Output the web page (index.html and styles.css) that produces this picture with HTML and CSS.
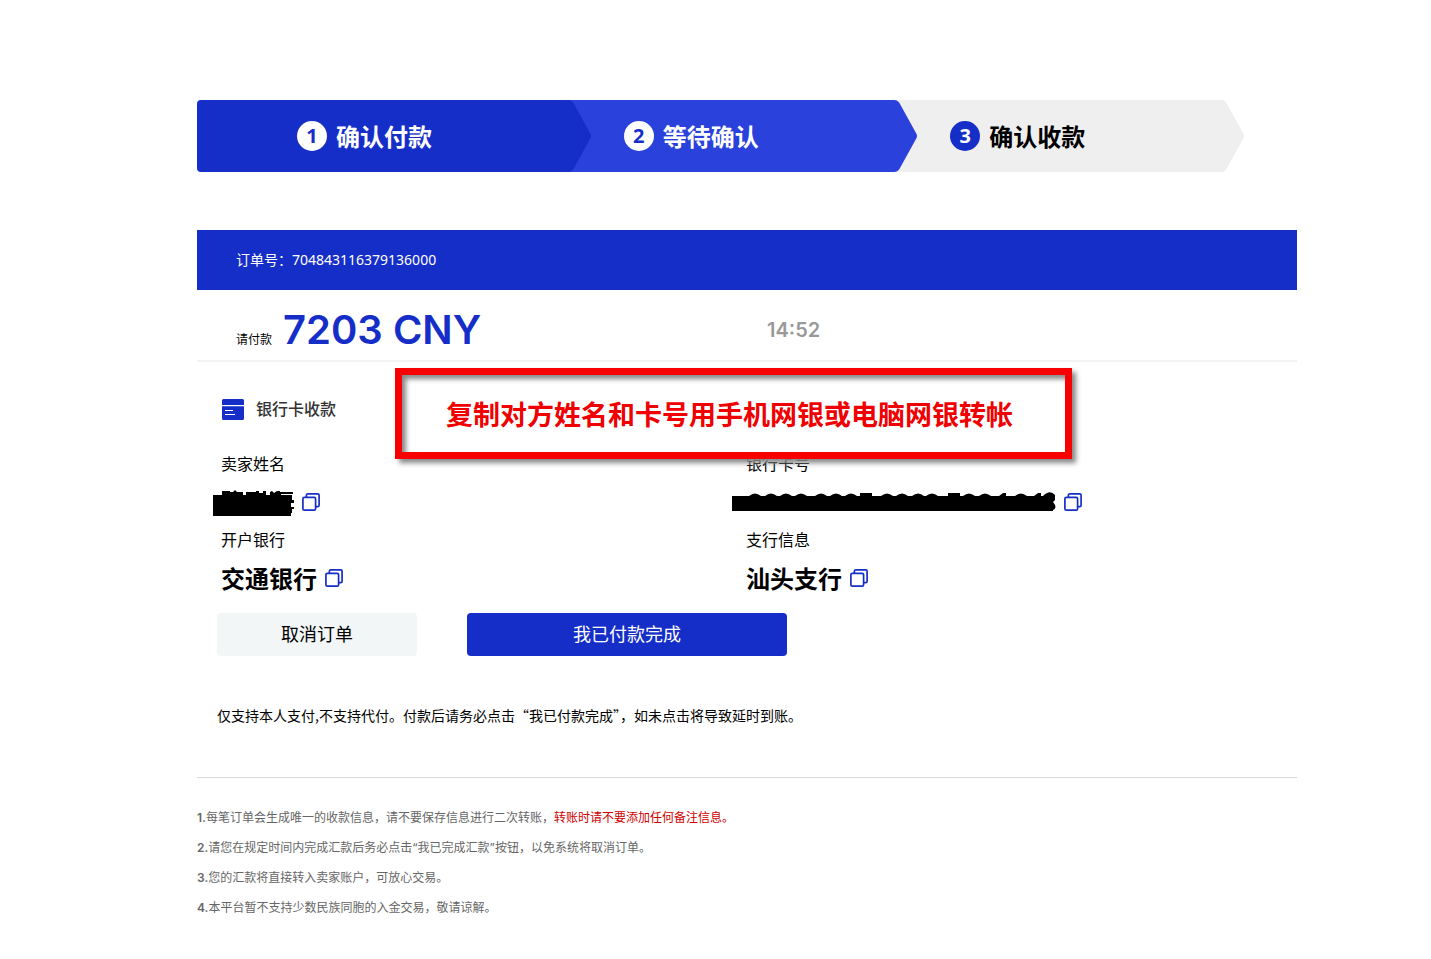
FILE: index.html
```html
<!DOCTYPE html>
<html lang="zh-CN">
<head>
<meta charset="utf-8">
<title>确认付款</title>
<link rel="stylesheet" href="styles.css">
</head>
<body>
<svg class="sprite" aria-hidden="true">
  <symbol id="cap" viewBox="0 0 24 72"><path d="M0 0H1Q5 0 7 4L23 33Q25 36 23 39L7 68Q5 72 1 72H0Z" fill="currentColor"/></symbol>
  <symbol id="copy" viewBox="0 0 18 18"><g fill="none" stroke="currentColor" stroke-width="1.7" stroke-linejoin="round"><rect x=".9" y="4.4" width="12.7" height="12.7" rx="1.4"/><path d="M4.4 4.2V2.3Q4.4 .9 5.8 .9H15.7Q17.1 .9 17.1 2.3V12.2Q17.1 13.6 15.7 13.6H13.8"/></g></symbol>
</svg>
<main class="page">
  <ol class="steps">
    <li class="step step-current"><div class="step-body"><span class="step-number">1</span><span class="step-name">确认付款</span></div><svg class="cap"><use href="#cap"/></svg></li>
    <li class="step step-next"><div class="step-body"><span class="step-number">2</span><span class="step-name">等待确认</span></div><svg class="cap"><use href="#cap"/></svg></li>
    <li class="step step-last"><div class="step-body"><span class="step-number">3</span><span class="step-name">确认收款</span></div><svg class="cap"><use href="#cap"/></svg></li>
  </ol>

  <section class="order">
    <header class="order-header">订单号：704843116379136000</header>
    <div class="amount-row">
      <p class="amount"><span class="amount-label">请付款</span><strong class="amount-value">7203 CNY</strong></p>
      <time class="timer">14:52</time>
    </div>

    <div class="payment">
      <h2 class="method">
        <svg class="method-icon" viewBox="0 0 22 21" aria-hidden="true"><path d="M1.5 0H20.5Q22 0 22 1.5V6H0V1.5Q0 0 1.5 0ZM0 7.2H22V19.5Q22 21 20.5 21H1.5Q0 21 0 19.5Z" fill="#162ec8"/><path d="M3 11.5H11M3 15.5H13" stroke="#fff" stroke-width="1.200"/></svg>
        <span>银行卡收款</span>
      </h2>
      <p class="callout">复制对方姓名和卡号用手机网银或电脑网银转帐</p>

      <dl class="details">
        <div class="detail">
          <dt>卖家姓名</dt>
          <dd><span class="hidden-value"><svg class="mask-name" viewBox="0 0 81 28" role="img" aria-label="已隐藏"><path d="M0 7H9V3H17V4H20L22 2L24 4H30V7H33V4H43V3H46V5H50V3H53V7H57V4L59 3L61 5L64 3H67V4H80V6H68V7H79V12H81V15H78V19H81V21H79V25H78V28H0Z"/></svg></span><button class="copy" type="button" aria-label="复制卖家姓名"><svg><use href="#copy"/></svg></button></dd>
        </div>
        <div class="detail">
          <dt>银行卡号</dt>
          <dd><span class="hidden-value"><svg class="mask-card" viewBox="0 0 324 20" role="img" aria-label="已隐藏"><path d="M0 4H17Q23-1 29 4H33Q39-1 45 4H48Q54-1 60 4H63Q69-1 75 4H83Q89-1 95 4H98Q104-1 110 4H113Q119-1 125 4H128V1H140V4H149Q155-1 161 4H164Q170-1 176 4H180Q186-1 192 4H194Q200-1 206 4H216V1H228V4H231Q237-1 243 4H247Q253-1 259 4H267L271 1H274V4H283Q289-1 295 4H302L306 1H309V4H311Q318-3 323 3V8L321 10Q326 16 321 18V19H0Z"/></svg></span><button class="copy" type="button" aria-label="复制银行卡号"><svg><use href="#copy"/></svg></button></dd>
        </div>
        <div class="detail">
          <dt>开户银行</dt>
          <dd><span>交通银行</span><button class="copy" type="button" aria-label="复制开户银行"><svg><use href="#copy"/></svg></button></dd>
        </div>
        <div class="detail">
          <dt>支行信息</dt>
          <dd><span>汕头支行</span><button class="copy" type="button" aria-label="复制支行信息"><svg><use href="#copy"/></svg></button></dd>
        </div>
      </dl>
    </div>

    <div class="actions">
      <button class="button button-cancel" type="button">取消订单</button>
      <button class="button button-paid" type="button">我已付款完成</button>
    </div>
    <p class="reminder">仅支持本人支付,不支持代付。付款后请务必点击“我已付款完成”，如未点击将导致延时到账。</p>
  </section>

  <section class="notes">
    <p><b>1.</b>每笔订单会生成唯一的收款信息，请不要保存信息进行二次转账，<em>转账时请不要添加任何备注信息。</em></p>
    <p><b>2.</b>请您在规定时间内完成汇款后务必点击“我已完成汇款”按钮，以免系统将取消订单。</p>
    <p><b>3.</b>您的汇款将直接转入卖家账户，可放心交易。</p>
    <p><b>4.</b>本平台暂不支持少数民族同胞的入金交易，敬请谅解。</p>
  </section>
</main>
</body>
</html>
```
FILE: styles.css
```css
* { box-sizing: border-box; }
body {
  margin: 0;
  background: #fff;
  color: #000;
  font-family: "Noto Sans CJK SC", sans-serif;
  font-size: 16px;
}
p, h2, dl, dd, ol { margin: 0; padding: 0; }
button { border: 0; padding: 0; font: inherit; cursor: pointer; }
.sprite { position: absolute; width: 0; height: 0; }

.page { max-width: 1431px; padding: 100px 134px 36px 197px; }

.steps { display: flex; padding-right: 53px; list-style: none; }
.step { position: relative; display: flex; flex: 1; height: 72px; }
.step + .step { margin-left: -67px; }
.step-current { z-index: 3; color: #162ec8; }
.step-next { z-index: 2; color: #2b41dc; }
.step-last { z-index: 1; color: #efefef; }
.step-body {
  display: flex;
  flex: 1;
  align-items: center;
  gap: 9px;
  padding-left: 100px;
  border-radius: 4px 0 0 4px;
  background: currentColor;
  font-size: 24px;
  font-weight: 700;
  white-space: nowrap;
}
.step-name { padding-bottom: 2px; color: #fff; }
.step-last .step-name { color: #000; }
.step-number {
  width: 30px;
  height: 30px;
  border-radius: 50%;
  background: #fff;
  color: #162ec8;
  font-family: "Noto Sans", sans-serif;
  font-size: 20px;
  line-height: 30px;
  text-align: center;
}
.step-last .step-number { background: #162ec8; color: #fff; }
.cap { flex: none; width: 24px; height: 72px; }

.order { margin-top: 58px; border-bottom: 1px solid #d9d9d9; }
.order-header {
  padding: 0 39px;
  background: #162ec8;
  color: #fff;
  font-family: "Noto Sans", "Noto Sans CJK SC", sans-serif;
  font-size: 14px;
  line-height: 60px;
}
.amount-row {
  display: grid;
  grid-template-columns: 57fr 53fr;
  align-items: center;
  height: 72px;
  padding-top: 10px;
  border-bottom: 2px solid #f3f3f3;
}
.amount { display: flex; align-items: baseline; gap: 11px; padding-left: 39px; }
.amount-label { font-size: 12px; }
.amount-value { color: #162ec8; font-family: Inter, sans-serif; font-size: 40px; font-weight: 600; line-height: 60px; }
.timer { color: #999; font-family: Inter, sans-serif; font-size: 20px; font-weight: 600; }

.payment { position: relative; padding: 31px 25px 0; }
.method { display: flex; align-items: center; gap: 12px; color: #333; font-size: 16px; font-weight: 500; line-height: 30px; }
.method-icon { width: 22px; height: 21px; margin-top: 3px; }
.callout {
  position: absolute;
  top: 6px;
  left: 18%;
  padding: 18px 52px 18px 44px;
  border: 7px solid #f80000;
  box-shadow: 4px 4px 5px #888, inset 4px 4px 5px #888;
  color: #f00000;
  font-size: 27px;
  font-weight: 700;
  line-height: 41px;
  white-space: nowrap;
}
.details { display: grid; grid-template-columns: 1fr 1fr; padding-top: 24px; }
.detail { height: 76px; margin-left: -1px; }
.detail dt { line-height: 32px; }
.detail dd { display: flex; align-items: center; gap: 8px; height: 46px; font-size: 24px; font-weight: 700; line-height: 46px; }
.hidden-value { display: flex; }
.mask-name { width: 81px; height: 28px; margin-left: -8px; }
.mask-card { width: 324px; height: 20px; margin-left: -14px; }
.copy { display: flex; background: none; color: #162ec8; }
.copy svg { width: 18px; height: 18px; }

.actions { display: flex; gap: 50px; padding: 14px 20px 0; }
.button { height: 43px; padding-bottom: 3px; border-radius: 4px; font-size: 18px; }
.button-cancel { width: 200px; background: #f2f6f7; color: #000; }
.button-paid { width: 320px; background: #162ec8; color: #fff; }
.reminder { padding: 44px 20px 47px; font-size: 14px; line-height: 30px; }

.notes { padding-top: 25px; color: #666; font-family: Inter, "Noto Sans CJK SC", sans-serif; font-size: 12px; line-height: 30px; }
.notes b { font-weight: 600; }
.notes em { color: #d00000; font-style: normal; }
```
